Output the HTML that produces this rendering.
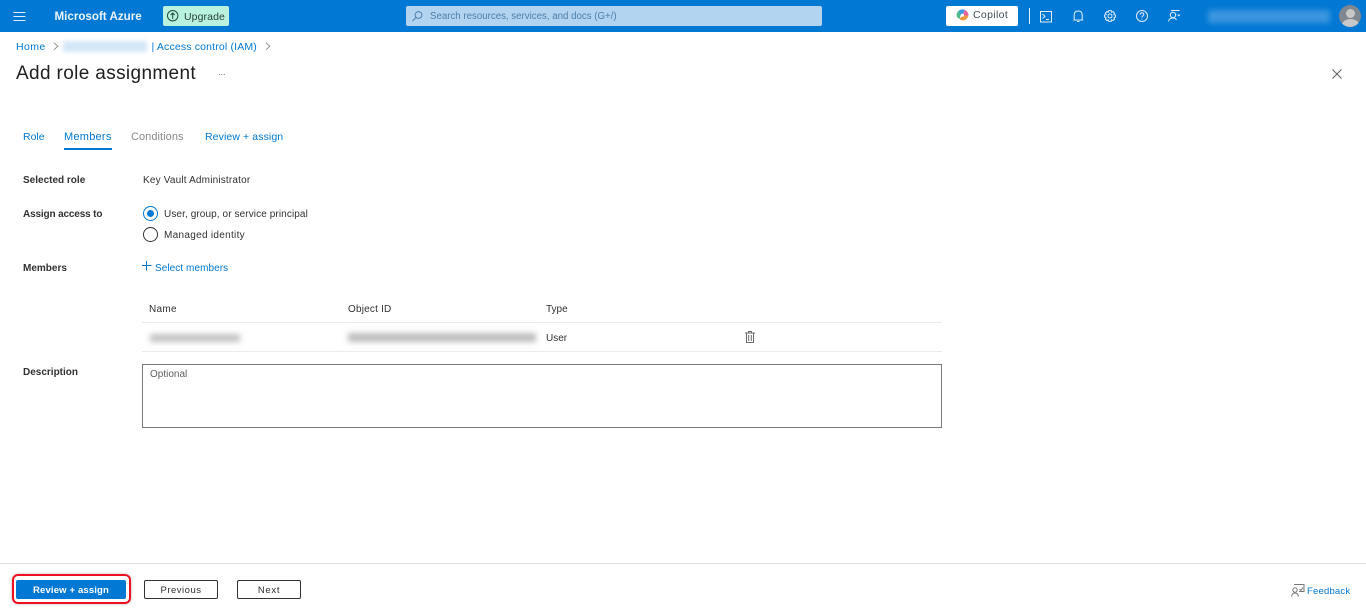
<!DOCTYPE html>
<html><head><meta charset="utf-8"><style>
html,body{margin:0;padding:0;width:1366px;height:615px;overflow:hidden;background:#fff;font-family:"Liberation Sans",sans-serif;font-size:10.5px;color:#323130}
.t{position:absolute;white-space:nowrap;line-height:14px}
.s{font-size:10px;margin-top:1px}
.b{font-weight:bold}
.l{color:#0078d4}
.blur{position:absolute}
svg{position:absolute;overflow:visible}
.btn{position:absolute;box-sizing:border-box;text-align:center;white-space:nowrap;border-radius:2px}
</style></head><body>
<div style="position:absolute;left:0;top:0;width:1366px;height:32px;background:#0078d4"></div>
<svg style="left:13px;top:11px" width="13" height="10" fill="none" stroke="#e2effa" stroke-width="1.1"><path d="M0.5 1.5H12.5M0.5 5.5H12.5M0.5 9.5H12.5"/></svg>
<div class="t b" style="left:54.5px;top:10px;color:#eaf4fc;font-size:11.6px">Microsoft Azure</div>
<div style="position:absolute;left:163px;top:6px;width:66px;height:20px;background:#b9f2de;border-radius:2px"></div>
<svg style="left:167px;top:10px" width="12" height="12" fill="none" stroke="#1f4a40" stroke-width="1"><circle cx="5.7" cy="5.7" r="5.2"/><path d="M5.7 9V3M3.7 5L5.7 3L7.7 5"/></svg>
<div class="t" style="left:184px;top:10px;color:#27423b;font-size:10.5px;letter-spacing:.1px">Upgrade</div>
<div style="position:absolute;left:406px;top:6px;width:416px;height:20px;background:#b2d4f0;border-radius:2px"></div>
<svg style="left:412px;top:11px" width="11" height="11" fill="none" stroke="#4d7faa" stroke-width="1"><circle cx="6.5" cy="4" r="3.4"/><path d="M4 6.5L0.5 10"/></svg>
<div class="t" style="left:430px;top:10px;color:#4f7ea8;font-size:9.7px">Search resources, services, and docs (G+/)</div>
<div style="position:absolute;left:946px;top:6px;width:72px;height:20px;background:#fff;border-radius:2px"></div>
<svg style="left:956px;top:9px" width="13" height="12"><path d="M3 1.5Q6 -.5 9 1L6.5 6L3 6Z" fill="#3f9be8"/><path d="M9 1Q12.5 3 12.5 6.5L8.5 7L6.5 6Z" fill="#e85fa0"/><path d="M0.5 6Q1 3 3 1.5L4.5 6L3.5 10Q1 9 .5 6Z" fill="#4fb98a"/><path d="M3.5 10L6 6.5L12.5 6.5Q11 11 7 11.5Q5 11.5 3.5 10Z" fill="#f0963c"/><circle cx="6.5" cy="6.2" r="1.6" fill="#fff"/></svg>
<div class="t" style="left:973px;top:8px;color:#3f4d5a;font-size:10.5px;letter-spacing:.35px">Copilot</div>
<div style="position:absolute;left:1029px;top:8px;width:1px;height:16px;background:#e4f0fa"></div>
<svg style="left:1040px;top:11px" width="12" height="12" fill="none" stroke="#e2effa" stroke-width="1"><path d="M.5 .5H11.5V11H.5Z"/><path d="M2.5 3L5 5.3L2.5 7.5M6 8.5H9"/></svg>
<svg style="left:1073px;top:10px" width="11" height="13" fill="none" stroke="#e2effa" stroke-width="1"><path d="M1.2 10V5Q1.2 1 5.2 1T9.2 5V10ZM.3 10H10.2M4 11.5H6.5"/></svg>
<svg style="left:1104px;top:10px" width="12" height="12" fill="none" stroke="#e2effa" stroke-width="1"><circle cx="6" cy="6" r="2"/><path d="M4.8 .6H7.2L7.6 2.2L9.1 1.6L10.6 3.2L9.8 4.6L11.5 5V7L9.9 7.5L10.6 9L9.1 10.5L7.6 9.8L7.2 11.4H4.8L4.4 9.8L2.9 10.5L1.4 9L2.1 7.5L.5 7V5L2.2 4.6L1.4 3.2L2.9 1.6L4.4 2.2Z"/></svg>
<svg style="left:1136px;top:10px" width="12" height="12" fill="none" stroke="#e2effa" stroke-width="1"><circle cx="6" cy="6" r="5.5"/><path d="M4.2 4.6Q4.2 2.8 6 2.8T7.8 4.5Q7.8 5.4 6.8 6T6 7.5M6 8.7V9.6"/></svg>
<svg style="left:1168px;top:10px" width="13" height="13" fill="none" stroke="#e2effa" stroke-width="1"><path d="M3 .5H11.5M.5 11.5Q1 8 5 8Q7.5 8 8.5 10"/><circle cx="5" cy="5" r="2.7"/><path d="M9 4.6H12.5L10.75 6.5Z" fill="#e2effa" stroke="none"/></svg>
<div class="blur" style="left:1208px;top:10px;width:122px;height:13px;background:#3c96de;filter:blur(3px)"></div>
<div style="position:absolute;left:1339px;top:5px;width:22px;height:22px;border-radius:50%;background:#7f8790;overflow:hidden"><div style="position:absolute;left:6.5px;top:4px;width:9px;height:9px;border-radius:50%;background:#c8c8c8"></div><div style="position:absolute;left:2.5px;top:14px;width:17px;height:12px;border-radius:50%;background:#c8c8c8"></div></div>

<div class="t l" style="left:16px;top:40px;letter-spacing:.4px">Home</div>
<svg style="left:53px;top:42px" width="6" height="9" fill="none" stroke="#8a8886" stroke-width=".9"><path d="M1 .8L4.8 4.3L1 7.8"/></svg>
<div class="blur" style="left:63px;top:41px;width:84px;height:11px;background:#d4e7f7;filter:blur(2px)"></div>
<div class="t l" style="left:151.5px;top:40px;letter-spacing:.16px">| Access control (IAM)</div>
<svg style="left:265px;top:42px" width="6" height="9" fill="none" stroke="#8a8886" stroke-width=".9"><path d="M1 .8L4.8 4.3L1 7.8"/></svg>
<div class="t" style="left:16px;top:63px;font-size:19px;line-height:22px;color:#201f1e;letter-spacing:.36px">Add role assignment</div>
<div class="t" style="left:218px;top:65px;color:#605e5c;font-size:9px">...</div>
<svg style="left:1332px;top:69px" width="10" height="10" fill="none" stroke="#605e5c"><path d="M.5 .5L9.5 9.5M9.5 .5L.5 9.5"/></svg>

<div class="t l" style="left:23px;top:130px">Role</div>
<div class="t l" style="left:64px;top:130px;font-size:11px;letter-spacing:.25px">Members</div>
<div style="position:absolute;left:64px;top:148px;width:48px;height:2px;background:#0078d4"></div>
<div class="t" style="left:131px;top:130px;color:#8a8886;font-size:11px;letter-spacing:.06px">Conditions</div>
<div class="t l" style="left:205px;top:130px;letter-spacing:.1px">Review + assign</div>

<div class="t b s" style="left:23px;top:173px">Selected role</div>
<div class="t s" style="left:143px;top:173px;letter-spacing:.18px">Key Vault Administrator</div>
<div class="t b s" style="left:23px;top:207px;letter-spacing:-.15px">Assign access to</div>
<div style="position:absolute;box-sizing:border-box;left:143px;top:206px;width:15px;height:15px;border:1px solid #0078d4;border-radius:50%"><div style="position:absolute;left:3px;top:3px;width:7px;height:7px;border-radius:50%;background:#0078d4"></div></div>
<div class="t s" style="left:164px;top:207px;letter-spacing:.1px">User, group, or service principal</div>
<div style="position:absolute;box-sizing:border-box;left:143px;top:227px;width:15px;height:15px;border:1px solid #323130;border-radius:50%"></div>
<div class="t s" style="left:164px;top:228px;letter-spacing:.3px">Managed identity</div>
<div class="t b s" style="left:23px;top:261px">Members</div>
<svg style="left:142px;top:261px" width="10" height="10" fill="none" stroke="#0078d4"><path d="M4.5 0V9.5M0 4.5H9.5"/></svg>
<div class="t l s" style="left:155px;top:261px;letter-spacing:.07px">Select members</div>

<div class="t s" style="left:149px;top:302px;letter-spacing:.3px">Name</div>
<div class="t s" style="left:348px;top:302px;letter-spacing:.2px">Object ID</div>
<div class="t s" style="left:546px;top:302px">Type</div>
<div style="position:absolute;left:142px;top:322px;width:800px;height:1px;background:#edebe9"></div>
<div class="blur" style="left:150px;top:334px;width:90px;height:8px;background:#c2c2c2;filter:blur(3px)"></div>
<div class="blur" style="left:348px;top:333px;width:188px;height:9px;background:#bdbdbd;filter:blur(3px)"></div>
<div class="t s" style="left:546px;top:331px">User</div>
<svg style="left:745px;top:331px" width="10" height="12" fill="none" stroke="#6a6a6a" stroke-width="1"><path d="M0 2H10M3.5 2V.5H6.5V2M1.5 2V11.5H8.5V2M3.7 4V10M6.3 4V10"/></svg>
<div style="position:absolute;left:142px;top:351px;width:800px;height:1px;background:#edebe9"></div>

<div class="t b s" style="left:23px;top:365px">Description</div>
<div style="position:absolute;box-sizing:border-box;left:142px;top:364px;width:800px;height:64px;border:1px solid #7a7a7a"></div>
<div class="t s" style="left:150px;top:367px;color:#605e5c">Optional</div>

<div style="position:absolute;left:0;top:563px;width:1366px;height:1px;background:#e1dfdd"></div>
<div style="position:absolute;box-sizing:border-box;left:12px;top:574px;width:119px;height:30px;border:2px solid #ee1122;border-radius:6px;box-shadow:0 0 3px #bbb"></div>
<div class="btn b" style="left:16px;top:580px;width:110px;height:19px;background:#0078d4;color:#fff;line-height:21px;font-size:9.5px;letter-spacing:.15px">Review + assign</div>
<div class="btn" style="left:144px;top:580px;width:74px;height:19px;border:1px solid #323130;line-height:19px;font-size:9.5px;letter-spacing:.5px">Previous</div>
<div class="btn" style="left:237px;top:580px;width:64px;height:19px;border:1px solid #323130;line-height:19px;font-size:9.5px;letter-spacing:.7px">Next</div>
<svg style="left:1291px;top:584px" width="14" height="13" fill="none" stroke="#777"><path d="M3 .5H13V7.5H8M8.5 5L10 6.5L12 3.5"/><circle cx="4" cy="6" r="2.2"/><path d="M.5 12.5Q1 9 4 9T7.5 12.5"/></svg>
<div class="t l" style="left:1307px;top:585px;font-size:9.5px;letter-spacing:.2px">Feedback</div>
</body></html>
